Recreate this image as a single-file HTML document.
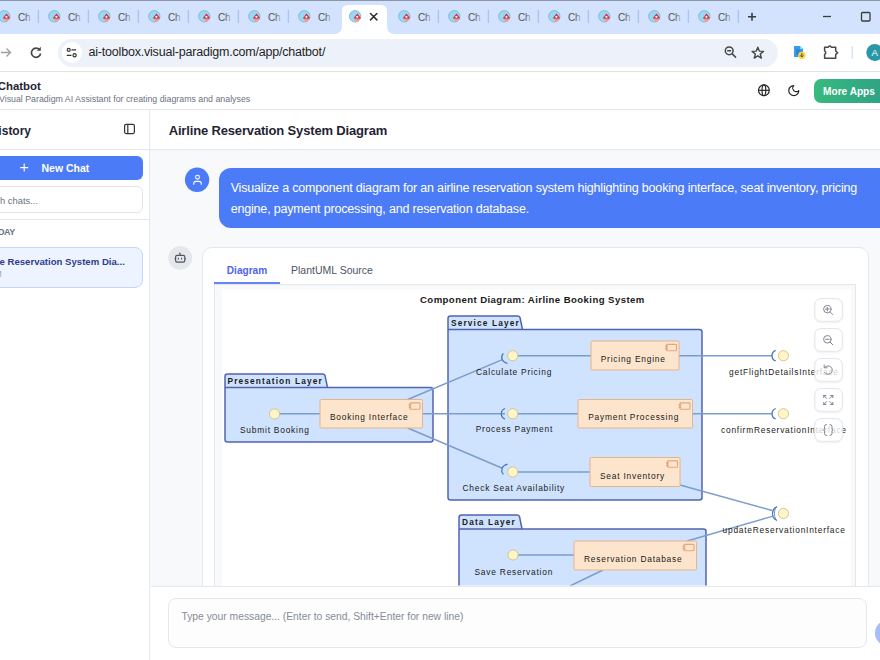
<!DOCTYPE html>
<html><head><meta charset="utf-8">
<style>
*{box-sizing:border-box;margin:0;padding:0}
html,body{width:880px;height:660px;overflow:hidden;background:#fff;font-family:"Liberation Sans",sans-serif;position:relative}
.a{position:absolute}
.t{position:absolute;white-space:nowrap;line-height:1}
</style></head><body>

<!-- ===== Browser tab strip ===== -->
<div class="a" style="left:0;top:0;width:880px;height:34px;background:#d3e3fd"></div>
<div class="a" style="left:0;top:0;width:880px;height:1px;background:#8c96a6"></div>

<!-- ===== Toolbar ===== -->
<div class="a" style="left:0;top:34px;width:880px;height:38px;background:#fff;border-bottom:1px solid #e3e3e3"></div>
<div class="a" style="left:57.5px;top:38.5px;width:720.5px;height:28.5px;border-radius:14.25px;background:#edf2fa"></div>
<div class="a" style="left:61.5px;top:42.3px;width:20.4px;height:20.4px;border-radius:10.2px;background:#fff"></div>
<div class="t" style="left:88.5px;top:46px;font-size:12.5px;letter-spacing:-0.2px;color:#1f1f1f">ai-toolbox.visual-paradigm.com/app/chatbot/</div>

<!-- ===== App header ===== -->
<div class="a" style="left:0;top:72px;width:880px;height:38px;background:#fff;border-bottom:1px solid #e4e5e9;box-shadow:0 1px 2px rgba(0,0,0,.06)"></div>
<div class="t" style="left:-2.3px;top:81px;font-size:11.4px;font-weight:700;color:#1f2433">Chatbot</div>
<div class="t" style="left:-1px;top:95px;font-size:8.8px;color:#6b7280">Visual Paradigm AI Assistant for creating diagrams and analyses</div>
<div class="a" style="left:813.8px;top:78.6px;width:90px;height:24px;border-radius:7px;background:linear-gradient(100deg,#38ba7d,#2b9b89)"></div>
<div class="t" style="left:823.1px;top:87px;font-size:10.1px;font-weight:700;color:#fff">More Apps</div>

<svg class="a" style="left:0;top:0" width="880" height="110" viewBox="0 0 880 110">
<defs><linearGradient id="fade" x1="0" x2="1" y1="0" y2="0"><stop offset="0" stop-color="#4d4d4d"/><stop offset="0.55" stop-color="#555"/><stop offset="1" stop-color="#a9b3c6"/></linearGradient><linearGradient id="dg" x1="0" x2="0" y1="0" y2="1"><stop offset="0" stop-color="#d3202e"/><stop offset="0.5" stop-color="#d63a44"/><stop offset="0.62" stop-color="#ec8f95"/><stop offset="1" stop-color="#f2a9ad"/></linearGradient></defs>
<path d="M334 34 Q342 34 342 26 L342 11 Q342 5 348 5 L381 5 Q387 5 387 11 L387 26 Q387 34 395 34 Z" fill="#fff"/>
<circle cx="4.3" cy="16.3" r="5.7" fill="#98d7f5" stroke="#86b5cf" stroke-width="0.9"/>
<path d="M6.5 13.600000000000001 L10.1 18.1 L6.5 22.5 L2.9 18.1 Z" fill="url(#dg)"/>
<circle cx="6.4" cy="16.8" r="1.1" fill="#fff"/>
<text x="17.9" y="21" font-family="Liberation Sans" font-size="10" fill="url(#fade)">Ch</text>
<circle cx="54.3" cy="16.3" r="5.7" fill="#98d7f5" stroke="#86b5cf" stroke-width="0.9"/>
<path d="M56.5 13.600000000000001 L60.099999999999994 18.1 L56.5 22.5 L52.9 18.1 Z" fill="url(#dg)"/>
<circle cx="56.4" cy="16.8" r="1.1" fill="#fff"/>
<text x="67.89999999999999" y="21" font-family="Liberation Sans" font-size="10" fill="url(#fade)">Ch</text>
<circle cx="104.3" cy="16.3" r="5.7" fill="#98d7f5" stroke="#86b5cf" stroke-width="0.9"/>
<path d="M106.5 13.600000000000001 L110.1 18.1 L106.5 22.5 L102.89999999999999 18.1 Z" fill="url(#dg)"/>
<circle cx="106.39999999999999" cy="16.8" r="1.1" fill="#fff"/>
<text x="117.89999999999999" y="21" font-family="Liberation Sans" font-size="10" fill="url(#fade)">Ch</text>
<circle cx="154.3" cy="16.3" r="5.7" fill="#98d7f5" stroke="#86b5cf" stroke-width="0.9"/>
<path d="M156.5 13.600000000000001 L160.10000000000002 18.1 L156.5 22.5 L152.9 18.1 Z" fill="url(#dg)"/>
<circle cx="156.4" cy="16.8" r="1.1" fill="#fff"/>
<text x="167.9" y="21" font-family="Liberation Sans" font-size="10" fill="url(#fade)">Ch</text>
<circle cx="204.3" cy="16.3" r="5.7" fill="#98d7f5" stroke="#86b5cf" stroke-width="0.9"/>
<path d="M206.5 13.600000000000001 L210.10000000000002 18.1 L206.5 22.5 L202.9 18.1 Z" fill="url(#dg)"/>
<circle cx="206.4" cy="16.8" r="1.1" fill="#fff"/>
<text x="217.9" y="21" font-family="Liberation Sans" font-size="10" fill="url(#fade)">Ch</text>
<circle cx="254.3" cy="16.3" r="5.7" fill="#98d7f5" stroke="#86b5cf" stroke-width="0.9"/>
<path d="M256.5 13.600000000000001 L260.1 18.1 L256.5 22.5 L252.9 18.1 Z" fill="url(#dg)"/>
<circle cx="256.40000000000003" cy="16.8" r="1.1" fill="#fff"/>
<text x="267.90000000000003" y="21" font-family="Liberation Sans" font-size="10" fill="url(#fade)">Ch</text>
<circle cx="304.3" cy="16.3" r="5.7" fill="#98d7f5" stroke="#86b5cf" stroke-width="0.9"/>
<path d="M306.5 13.600000000000001 L310.1 18.1 L306.5 22.5 L302.90000000000003 18.1 Z" fill="url(#dg)"/>
<circle cx="306.40000000000003" cy="16.8" r="1.1" fill="#fff"/>
<text x="317.90000000000003" y="21" font-family="Liberation Sans" font-size="10" fill="url(#fade)">Ch</text>
<circle cx="355.1" cy="16.3" r="5.7" fill="#98d7f5" stroke="#86b5cf" stroke-width="0.9"/>
<path d="M357.3 13.600000000000001 L360.90000000000003 18.1 L357.3 22.5 L353.70000000000005 18.1 Z" fill="url(#dg)"/>
<circle cx="357.20000000000005" cy="16.8" r="1.1" fill="#fff"/>
<path d="M370.5 13.5 L376.9 19.9 M376.9 13.5 L370.5 19.9" stroke="#303030" stroke-width="1.5" stroke-linecap="round"/>
<circle cx="404.3" cy="16.3" r="5.7" fill="#98d7f5" stroke="#86b5cf" stroke-width="0.9"/>
<path d="M406.5 13.600000000000001 L410.1 18.1 L406.5 22.5 L402.90000000000003 18.1 Z" fill="url(#dg)"/>
<circle cx="406.40000000000003" cy="16.8" r="1.1" fill="#fff"/>
<text x="417.90000000000003" y="21" font-family="Liberation Sans" font-size="10" fill="url(#fade)">Ch</text>
<circle cx="454.3" cy="16.3" r="5.7" fill="#98d7f5" stroke="#86b5cf" stroke-width="0.9"/>
<path d="M456.5 13.600000000000001 L460.1 18.1 L456.5 22.5 L452.90000000000003 18.1 Z" fill="url(#dg)"/>
<circle cx="456.40000000000003" cy="16.8" r="1.1" fill="#fff"/>
<text x="467.90000000000003" y="21" font-family="Liberation Sans" font-size="10" fill="url(#fade)">Ch</text>
<circle cx="504.3" cy="16.3" r="5.7" fill="#98d7f5" stroke="#86b5cf" stroke-width="0.9"/>
<path d="M506.5 13.600000000000001 L510.1 18.1 L506.5 22.5 L502.90000000000003 18.1 Z" fill="url(#dg)"/>
<circle cx="506.40000000000003" cy="16.8" r="1.1" fill="#fff"/>
<text x="517.9" y="21" font-family="Liberation Sans" font-size="10" fill="url(#fade)">Ch</text>
<circle cx="554.3" cy="16.3" r="5.7" fill="#98d7f5" stroke="#86b5cf" stroke-width="0.9"/>
<path d="M556.5 13.600000000000001 L560.0999999999999 18.1 L556.5 22.5 L552.9 18.1 Z" fill="url(#dg)"/>
<circle cx="556.4" cy="16.8" r="1.1" fill="#fff"/>
<text x="567.9" y="21" font-family="Liberation Sans" font-size="10" fill="url(#fade)">Ch</text>
<circle cx="604.3" cy="16.3" r="5.7" fill="#98d7f5" stroke="#86b5cf" stroke-width="0.9"/>
<path d="M606.5 13.600000000000001 L610.0999999999999 18.1 L606.5 22.5 L602.9 18.1 Z" fill="url(#dg)"/>
<circle cx="606.4" cy="16.8" r="1.1" fill="#fff"/>
<text x="617.9" y="21" font-family="Liberation Sans" font-size="10" fill="url(#fade)">Ch</text>
<circle cx="654.3" cy="16.3" r="5.7" fill="#98d7f5" stroke="#86b5cf" stroke-width="0.9"/>
<path d="M656.5 13.600000000000001 L660.0999999999999 18.1 L656.5 22.5 L652.9 18.1 Z" fill="url(#dg)"/>
<circle cx="656.4" cy="16.8" r="1.1" fill="#fff"/>
<text x="667.9" y="21" font-family="Liberation Sans" font-size="10" fill="url(#fade)">Ch</text>
<circle cx="704.3" cy="16.3" r="5.7" fill="#98d7f5" stroke="#86b5cf" stroke-width="0.9"/>
<path d="M706.5 13.600000000000001 L710.0999999999999 18.1 L706.5 22.5 L702.9 18.1 Z" fill="url(#dg)"/>
<circle cx="706.4" cy="16.8" r="1.1" fill="#fff"/>
<text x="717.9" y="21" font-family="Liberation Sans" font-size="10" fill="url(#fade)">Ch</text>
<line x1="38.4" y1="10" x2="38.4" y2="23" stroke="#abc4f2" stroke-width="1.4"/>
<line x1="88.4" y1="10" x2="88.4" y2="23" stroke="#abc4f2" stroke-width="1.4"/>
<line x1="138.4" y1="10" x2="138.4" y2="23" stroke="#abc4f2" stroke-width="1.4"/>
<line x1="188.4" y1="10" x2="188.4" y2="23" stroke="#abc4f2" stroke-width="1.4"/>
<line x1="238.4" y1="10" x2="238.4" y2="23" stroke="#abc4f2" stroke-width="1.4"/>
<line x1="288.4" y1="10" x2="288.4" y2="23" stroke="#abc4f2" stroke-width="1.4"/>
<line x1="438.4" y1="10" x2="438.4" y2="23" stroke="#abc4f2" stroke-width="1.4"/>
<line x1="488.4" y1="10" x2="488.4" y2="23" stroke="#abc4f2" stroke-width="1.4"/>
<line x1="538.4" y1="10" x2="538.4" y2="23" stroke="#abc4f2" stroke-width="1.4"/>
<line x1="588.4" y1="10" x2="588.4" y2="23" stroke="#abc4f2" stroke-width="1.4"/>
<line x1="638.4" y1="10" x2="638.4" y2="23" stroke="#abc4f2" stroke-width="1.4"/>
<line x1="688.4" y1="10" x2="688.4" y2="23" stroke="#abc4f2" stroke-width="1.4"/>
<line x1="738.4" y1="10" x2="738.4" y2="23" stroke="#abc4f2" stroke-width="1.4"/>
<path d="M748 16.8 H756 M752 12.8 V20.8" stroke="#3c3c3c" stroke-width="1.6"/>
<path d="M823 16.5 H831" stroke="#3c3c3c" stroke-width="1.3"/>
<rect x="861.5" y="12.5" width="8.5" height="8.5" rx="1" fill="none" stroke="#3c3c3c" stroke-width="1.3"/>
<path d="M1 52.5 H10.5 M6.5 48.5 L10.5 52.5 L6.5 56.5" fill="none" stroke="#a0a0a0" stroke-width="1.4"/>
<path d="M39.6 49.8 A4.6 4.6 0 1 0 40.6 53.5" fill="none" stroke="#474747" stroke-width="1.6"/>
<path d="M40.8 46.8 L40.8 50.8 L36.8 50.8 Z" fill="#474747"/>
<circle cx="68.7" cy="49.9" r="1.5" fill="none" stroke="#333" stroke-width="1.2"/>
<path d="M71.5 49.9 H76 M66.8 55.3 H71.5" stroke="#333" stroke-width="1.3"/>
<circle cx="74.6" cy="55.3" r="1.6" fill="none" stroke="#333" stroke-width="1.2"/>
<circle cx="729.2" cy="50.8" r="3.9" fill="none" stroke="#474747" stroke-width="1.5"/>
<path d="M727.2 50.8 H731.2 M732 53.6 L736 57.6" stroke="#474747" stroke-width="1.5"/>
<polygon points="757.80,47.20 759.33,51.10 763.51,51.35 760.27,54.00 761.33,58.05 757.80,55.80 754.27,58.05 755.33,54.00 752.09,51.35 756.27,51.10" fill="none" stroke="#474747" stroke-width="1.4" stroke-linejoin="round"/>
<path d="M794 46.5 Q794 46 794.5 46 L800 46 L803 49 L803 56.5 Q803 57 802.5 57 L794.5 57 Q794 57 794 56.5 Z" fill="#3a9be6"/>
<path d="M800 46 L803 49 L800 49 Z" fill="#7fe0e6"/>
<path d="M796 50 H799.5 M796 52 H799.5 M796 54 H798.5" stroke="#1d5fa8" stroke-width="0.7"/>
<circle cx="801.8" cy="55.3" r="3.6" fill="#f7d53a"/>
<path d="M801.8 53.2 V56.5 M800.2 55.4 L801.8 57 L803.4 55.4" fill="none" stroke="#3a3a3a" stroke-width="0.9"/>
<path d="M824.6 47.2 H828.3 Q829.8 45 831.3 47.2 H835.7 V51 L837.7 52.7 L835.7 54.4 V58.2 H824.6 V54.4 Q826.9 52.7 824.6 51 Z" fill="none" stroke="#474747" stroke-width="1.5" stroke-linejoin="round"/>
<line x1="852.2" y1="46" x2="852.2" y2="59" stroke="#c8d8f8" stroke-width="1"/>
<circle cx="874.8" cy="52.6" r="8.5" fill="#2a97a6"/>
<text x="871.4" y="56.2" font-family="Liberation Sans" font-size="9.6" fill="#fff">A</text>
<g fill="none" stroke="#222" stroke-width="1.15"><circle cx="763.9" cy="90.3" r="5.4"/><ellipse cx="763.9" cy="90.3" rx="1.9" ry="5.4"/><path d="M758.5 90.3 H769.3"/></g>
<path transform="translate(793.8 90.6) scale(0.56) translate(-12 -12)" d="M12 3a6 6 0 0 0 9 9 9 9 0 1 1-9-9Z" fill="none" stroke="#222" stroke-width="2.1" stroke-linejoin="round"/>
</svg>
<!-- ===== Sidebar ===== -->
<div class="a" style="left:0;top:110px;width:150px;height:550px;background:#fff;border-right:1px solid #e5e7eb"></div>
<div class="a" style="left:0;top:149px;width:149px;height:1px;background:#e5e7eb"></div>
<div class="t" style="left:-10.3px;top:124.5px;font-size:12px;font-weight:700;color:#1f2433">History</div>
<svg class="a" style="left:0;top:110px" width="150" height="180" viewBox="0 110 150 180">
<rect x="124.6" y="124.4" width="9.8" height="9.2" rx="1.5" fill="none" stroke="#333" stroke-width="1.2"/>
<path d="M127.8 124.4 V133.6" stroke="#333" stroke-width="1.2"/>
</svg>
<div class="a" style="left:-8px;top:155.5px;width:151px;height:24.3px;border-radius:6px;background:#4c7bf8"></div>
<svg class="a" style="left:0;top:150px" width="40" height="30" viewBox="0 150 40 30"><path d="M20.2 167.6 H28.2 M24.2 163.6 V171.6" stroke="#fff" stroke-width="1.1"/></svg>
<div class="t" style="left:41.5px;top:163px;font-size:10.5px;font-weight:700;color:#fff">New Chat</div>
<div class="a" style="left:-8px;top:186px;width:151px;height:26.5px;border-radius:6px;border:1px solid #e3e5ea;background:#fff"></div>
<div class="t" style="left:0px;top:196px;font-size:9.4px;color:#6b7280">h chats...</div>
<div class="a" style="left:0;top:219px;width:149px;height:1px;background:#e5e7eb"></div>
<div class="t" style="left:-2px;top:228px;font-size:9px;font-weight:700;color:#6b7280;letter-spacing:-0.4px">DAY</div>
<div class="a" style="left:-8px;top:247px;width:151px;height:40.5px;border-radius:8px;border:1px solid #c3d5fb;background:#eef4ff"></div>
<div class="t" style="left:-0.5px;top:257px;font-size:9.6px;font-weight:700;color:#2f3b8f">e Reservation System Dia...</div>
<div class="t" style="left:-5.5px;top:270px;font-size:8.5px;color:#9aa1ad">M</div>

<!-- ===== Main ===== -->
<div class="a" style="left:150px;top:110px;width:730px;height:40px;background:#fff;border-bottom:1px solid #e5e7eb"></div>
<div class="t" style="left:168.7px;top:124px;font-size:13px;letter-spacing:-0.16px;font-weight:700;color:#1f2433">Airline Reservation System Diagram</div>
<div class="a" style="left:150px;top:150px;width:730px;height:436px;background:#f8f9fb"></div>

<!-- user message -->
<svg class="a" style="left:160px;top:160px" width="60" height="40" viewBox="160 160 60 40">
<circle cx="197.1" cy="179.8" r="12.2" fill="#4c7bf7"/>
<circle cx="197.5" cy="177.2" r="1.9" fill="none" stroke="#fff" stroke-width="1.1"/>
<path d="M193.7 184.8 V183.8 Q193.7 181.4 196 181.4 H199 Q201.3 181.4 201.3 183.8 V184.8" fill="none" stroke="#fff" stroke-width="1.1"/>
</svg>
<div class="a" style="left:218.5px;top:168px;width:700px;height:60px;border-radius:12px;background:#4c7bf7"></div>
<div class="t" style="left:230.7px;top:182px;font-size:12.5px;letter-spacing:-0.18px;color:#fff">Visualize a component diagram for an airline reservation system highlighting booking interface, seat inventory, pricing</div>
<div class="t" style="left:230.7px;top:203px;font-size:12.5px;letter-spacing:-0.18px;color:#fff">engine, payment processing, and reservation database.</div>

<!-- bot -->
<svg class="a" style="left:160px;top:240px" width="40" height="40" viewBox="160 240 40 40">
<circle cx="180.2" cy="257.8" r="11.9" fill="#e5e7eb"/>
<rect x="175.6" y="255.4" width="9.2" height="6.8" rx="1.6" fill="none" stroke="#4b5563" stroke-width="1.2"/>
<path d="M178.4 257.8 V259.6 M181.6 257.8 V259.6 M174.4 258.7 H175.6 M184.8 258.7 H186 M180.1 255.4 V253.8 Q180.1 253 179 253" fill="none" stroke="#4b5563" stroke-width="1.1"/>
</svg>
<div class="a" style="left:202px;top:246.5px;width:667px;height:420px;border-radius:10px;border:1px solid #e5e7eb;background:#fff"></div>
<div class="t" style="left:226.8px;top:266px;font-size:10.1px;font-weight:700;color:#4f63f0">Diagram</div>
<div class="t" style="left:291px;top:265px;font-size:10.5px;color:#4b5563">PlantUML Source</div>
<div class="a" style="left:214px;top:284px;width:642px;height:1px;background:#e5e7eb"></div>
<div class="a" style="left:214px;top:282px;width:65.5px;height:2px;background:#6586f6"></div>
<div class="a" style="left:214px;top:285px;width:642px;height:320px;border:1px solid #e5e7eb;border-top:0;background:#f8f9fb"></div>
<div class="a" style="left:221.5px;top:288.5px;width:629px;height:320px;background:#fff"></div>

<svg class="a" style="left:0;top:0" width="880" height="660" viewBox="0 0 880 660">
<defs><clipPath id="dc"><rect x="221.5" y="288.5" width="629" height="297"/></clipPath></defs>
<g clip-path="url(#dc)">
<text x="420" y="303" font-family="Liberation Sans" font-size="9.6" font-weight="700" letter-spacing="0.42" fill="#1a1a1a">Component Diagram: Airline Booking System</text>
<path d="M225 376.5 Q225 374 227.5 374 L322.5 374 Q324.5 374 325.0 375.5 L327.5 387.5 L430.5 387.5 Q433 387.5 433 390.0 L433 439.5 Q433 442 430.5 442 L227.5 442 Q225 442 225 439.5 Z M225 387.5 H327.5" fill="#cfe2fe" stroke="#5163b3" stroke-width="1.5"/>
<text x="227.5" y="383.5" font-family="Liberation Sans" font-size="8.3" font-weight="700" letter-spacing="1.15" fill="#1a1a1a">Presentation Layer</text>
<path d="M448 318.5 Q448 316 450.5 316 L517.5 316 Q519.5 316 520.0 317.5 L522.5 329.5 L699.5 329.5 Q702 329.5 702 332.0 L702 497.5 Q702 500 699.5 500 L450.5 500 Q448 500 448 497.5 Z M448 329.5 H522.5" fill="#cfe2fe" stroke="#5163b3" stroke-width="1.5"/>
<text x="451" y="325.5" font-family="Liberation Sans" font-size="8.3" font-weight="700" letter-spacing="1.15" fill="#1a1a1a">Service Layer</text>
<path d="M459 517.5 Q459 515 461.5 515 L517 515 Q519 515 519.5 516.5 L522 529 L703.5 529 Q706 529 706 531.5 L706 637.5 Q706 640 703.5 640 L461.5 640 Q459 640 459 637.5 Z M459 529 H522" fill="#cfe2fe" stroke="#5163b3" stroke-width="1.5"/>
<text x="462" y="525" font-family="Liberation Sans" font-size="8.3" font-weight="700" letter-spacing="1.15" fill="#1a1a1a">Data Layer</text>
<line x1="279" y1="413.75" x2="320" y2="413.75" stroke="#7b9dcb" stroke-width="1.4"/>
<line x1="407.7" y1="399.5" x2="501.8" y2="359.8" stroke="#7b9dcb" stroke-width="1.4"/>
<line x1="422.5" y1="413.75" x2="505" y2="413.75" stroke="#7b9dcb" stroke-width="1.4"/>
<line x1="407.7" y1="428" x2="501.8" y2="468" stroke="#7b9dcb" stroke-width="1.4"/>
<line x1="517.5" y1="355.75" x2="591" y2="355.75" stroke="#7b9dcb" stroke-width="1.4"/>
<line x1="517.5" y1="413.75" x2="578" y2="413.75" stroke="#7b9dcb" stroke-width="1.4"/>
<line x1="517.5" y1="472" x2="590" y2="472" stroke="#7b9dcb" stroke-width="1.4"/>
<line x1="679" y1="355.75" x2="772" y2="355.75" stroke="#7b9dcb" stroke-width="1.4"/>
<line x1="692.5" y1="413.75" x2="772" y2="413.75" stroke="#7b9dcb" stroke-width="1.4"/>
<line x1="680" y1="485" x2="772.3" y2="510.5" stroke="#7b9dcb" stroke-width="1.4"/>
<line x1="687" y1="541" x2="772.3" y2="516.3" stroke="#7b9dcb" stroke-width="1.4"/>
<line x1="518" y1="555" x2="574" y2="555" stroke="#7b9dcb" stroke-width="1.4"/>
<line x1="603" y1="570" x2="570" y2="586" stroke="#7b9dcb" stroke-width="1.4"/>
<rect x="320" y="399.5" width="102.5" height="28.5" rx="1.2" fill="#fde5cd" stroke="#e6b48a" stroke-width="1"/>
<rect x="410.0" y="402.9" width="10" height="6.3" rx="0.6" fill="#fde5cd" stroke="#e2a77c" stroke-width="1.1"/>
<rect x="408.7" y="404.0" width="2.6" height="1.7" fill="#e2a77c"/>
<rect x="408.7" y="406.5" width="2.6" height="1.7" fill="#e2a77c"/>
<text x="330" y="420" font-family="Liberation Sans" font-size="8.4" letter-spacing="0.78" fill="#1a1a1a">Booking Interface</text>
<rect x="591" y="341" width="88" height="29" rx="1.2" fill="#fde5cd" stroke="#e6b48a" stroke-width="1"/>
<rect x="666.5" y="344.4" width="10" height="6.3" rx="0.6" fill="#fde5cd" stroke="#e2a77c" stroke-width="1.1"/>
<rect x="665.2" y="345.5" width="2.6" height="1.7" fill="#e2a77c"/>
<rect x="665.2" y="348.0" width="2.6" height="1.7" fill="#e2a77c"/>
<text x="600.75" y="362" font-family="Liberation Sans" font-size="8.4" letter-spacing="0.78" fill="#1a1a1a">Pricing Engine</text>
<rect x="578" y="399.5" width="114.5" height="28.5" rx="1.2" fill="#fde5cd" stroke="#e6b48a" stroke-width="1"/>
<rect x="680.0" y="402.9" width="10" height="6.3" rx="0.6" fill="#fde5cd" stroke="#e2a77c" stroke-width="1.1"/>
<rect x="678.7" y="404.0" width="2.6" height="1.7" fill="#e2a77c"/>
<rect x="678.7" y="406.5" width="2.6" height="1.7" fill="#e2a77c"/>
<text x="588.25" y="420" font-family="Liberation Sans" font-size="8.4" letter-spacing="0.78" fill="#1a1a1a">Payment Processing</text>
<rect x="590" y="457.5" width="90" height="29.0" rx="1.2" fill="#fde5cd" stroke="#e6b48a" stroke-width="1"/>
<rect x="667.5" y="460.9" width="10" height="6.3" rx="0.6" fill="#fde5cd" stroke="#e2a77c" stroke-width="1.1"/>
<rect x="666.2" y="462.0" width="2.6" height="1.7" fill="#e2a77c"/>
<rect x="666.2" y="464.5" width="2.6" height="1.7" fill="#e2a77c"/>
<text x="600" y="479" font-family="Liberation Sans" font-size="8.4" letter-spacing="0.78" fill="#1a1a1a">Seat Inventory</text>
<rect x="574" y="541" width="122.5" height="29" rx="1.2" fill="#fde5cd" stroke="#e6b48a" stroke-width="1"/>
<rect x="684.0" y="544.4" width="10" height="6.3" rx="0.6" fill="#fde5cd" stroke="#e2a77c" stroke-width="1.1"/>
<rect x="682.7" y="545.5" width="2.6" height="1.7" fill="#e2a77c"/>
<rect x="682.7" y="548.0" width="2.6" height="1.7" fill="#e2a77c"/>
<text x="584" y="562" font-family="Liberation Sans" font-size="8.4" letter-spacing="0.78" fill="#1a1a1a">Reservation Database</text>
<circle cx="274.5" cy="414" r="5.1" fill="#fef5c9" stroke="#d2c182" stroke-width="0.9"/>
<text x="240" y="432.5" font-family="Liberation Sans" font-size="8.4" letter-spacing="0.78" fill="#1a1a1a">Submit Booking</text>
<circle cx="512.7" cy="355.7" r="5.1" fill="#fef5c9" stroke="#d2c182" stroke-width="0.9"/>
<text x="476" y="374.5" font-family="Liberation Sans" font-size="8.4" letter-spacing="0.78" fill="#1a1a1a">Calculate Pricing</text>
<path d="M503.4 353.4 C500.5 356.5 501 361.5 507.6 363.5" fill="none" stroke="#4a76b4" stroke-width="1.3"/>
<circle cx="512.7" cy="413.75" r="5.1" fill="#fef5c9" stroke="#d2c182" stroke-width="0.9"/>
<text x="475.75" y="432" font-family="Liberation Sans" font-size="8.4" letter-spacing="0.78" fill="#1a1a1a">Process Payment</text>
<path d="M505.00000000000006 408.5 A5.6 5.6 0 0 0 505.00000000000006 419.0" fill="none" stroke="#4a76b4" stroke-width="1.3"/>
<circle cx="512.7" cy="472" r="5.1" fill="#fef5c9" stroke="#d2c182" stroke-width="0.9"/>
<text x="462.5" y="491" font-family="Liberation Sans" font-size="8.4" letter-spacing="0.78" fill="#1a1a1a">Check Seat Availability</text>
<path d="M507.6 464.2 C501 466 500.5 471 503.4 474.4" fill="none" stroke="#4a76b4" stroke-width="1.3"/>
<circle cx="783.4" cy="355.7" r="5.1" fill="#fef5c9" stroke="#d2c182" stroke-width="0.9"/>
<text x="729" y="375" font-family="Liberation Sans" font-size="8.4" letter-spacing="0.78" fill="#1a1a1a">getFlightDetailsInterface</text>
<path d="M775.6999999999999 350.45 A5.6 5.6 0 0 0 775.6999999999999 360.95" fill="none" stroke="#4a76b4" stroke-width="1.3"/>
<circle cx="783.4" cy="413.75" r="5.1" fill="#fef5c9" stroke="#d2c182" stroke-width="0.9"/>
<text x="721" y="432.5" font-family="Liberation Sans" font-size="8.4" letter-spacing="0.78" fill="#1a1a1a">confirmReservationInterface</text>
<path d="M775.6999999999999 408.5 A5.6 5.6 0 0 0 775.6999999999999 419.0" fill="none" stroke="#4a76b4" stroke-width="1.3"/>
<circle cx="783.4" cy="513.4" r="5.1" fill="#fef5c9" stroke="#d2c182" stroke-width="0.9"/>
<text x="722.5" y="532.5" font-family="Liberation Sans" font-size="8.4" letter-spacing="0.78" fill="#1a1a1a">updateReservationInterface</text>
<path d="M777 506.6 C771 509 771 518 777 520.5" fill="none" stroke="#4a76b4" stroke-width="1.3"/>
<path d="M776 507.5 C774 510 774 517 776 519.5" fill="none" stroke="#4a76b4" stroke-width="0.8"/>
<circle cx="513" cy="555" r="5.1" fill="#fef5c9" stroke="#d2c182" stroke-width="0.9"/>
<text x="474.5" y="574.5" font-family="Liberation Sans" font-size="8.4" letter-spacing="0.78" fill="#1a1a1a">Save Reservation</text>
</g>
<rect x="814.8" y="299.7" width="27.6" height="22.8" rx="6" fill="none" stroke="#000" stroke-opacity="0.04" stroke-width="2"/>
<rect x="814.8" y="298.5" width="27.6" height="22.8" rx="6" fill="#fff" fill-opacity="0.78" stroke="#e4e6eb" stroke-width="1"/>
<rect x="814.8" y="329.7" width="27.6" height="22.8" rx="6" fill="none" stroke="#000" stroke-opacity="0.04" stroke-width="2"/>
<rect x="814.8" y="328.5" width="27.6" height="22.8" rx="6" fill="#fff" fill-opacity="0.78" stroke="#e4e6eb" stroke-width="1"/>
<rect x="814.8" y="359.7" width="27.6" height="22.8" rx="6" fill="none" stroke="#000" stroke-opacity="0.04" stroke-width="2"/>
<rect x="814.8" y="358.5" width="27.6" height="22.8" rx="6" fill="#fff" fill-opacity="0.78" stroke="#e4e6eb" stroke-width="1"/>
<rect x="814.8" y="389.7" width="27.6" height="22.8" rx="6" fill="none" stroke="#000" stroke-opacity="0.04" stroke-width="2"/>
<rect x="814.8" y="388.5" width="27.6" height="22.8" rx="6" fill="#fff" fill-opacity="0.78" stroke="#e4e6eb" stroke-width="1"/>
<rect x="814.8" y="419.7" width="27.6" height="22.8" rx="6" fill="none" stroke="#000" stroke-opacity="0.04" stroke-width="2"/>
<rect x="814.8" y="418.5" width="27.6" height="22.8" rx="6" fill="#fff" fill-opacity="0.78" stroke="#e4e6eb" stroke-width="1"/>
<g fill="none" stroke="#80858f" stroke-width="1" stroke-linecap="round">
<circle cx="827.3" cy="309.1" r="3.7"/><path d="M825.5 309.1 H829.1 M827.3 307.3 V310.9 M830 311.8 L832.8 314.6"/>
<circle cx="827.3" cy="339.3" r="3.7"/><path d="M825.5 339.3 H829.1 M830 342 L832.8 344.8"/>
<path d="M825 367.2 A4.2 4.2 0 1 1 824.6 372.5"/><path d="M824.2 365 V367.8 H827"/>
<path d="M823.8 395.5 L826.8 398.5 M823.8 395.5 H826 M823.8 395.5 V397.7 M832.8 395.5 L829.8 398.5 M832.8 395.5 H830.6 M832.8 395.5 V397.7 M823.8 404.5 L826.8 401.5 M823.8 404.5 H826 M823.8 404.5 V402.3 M832.8 404.5 L829.8 401.5 M832.8 404.5 H830.6 M832.8 404.5 V402.3"/>
<path d="M826.5 424.5 Q824.5 424.5 824.5 426.5 V428.8 Q824.5 430 823.5 430 Q824.5 430 824.5 431.2 V433.5 Q824.5 435.5 826.5 435.5 M830 424.5 Q832 424.5 832 426.5 V428.8 Q832 430 833 430 Q832 430 832 431.2 V433.5 Q832 435.5 830 435.5"/>
</g>
</svg>

<!-- ===== Input area ===== -->
<div class="a" style="left:151px;top:585.5px;width:729px;height:75px;background:#fff;border-top:1px solid #e5e7eb"></div>
<div class="a" style="left:168px;top:598px;width:699px;height:50px;border-radius:8px;border:1px solid #e5e7eb;background:#fdfdfd"></div>
<div class="t" style="left:181.5px;top:612px;font-size:10.3px;color:#878c96">Type your message... (Enter to send, Shift+Enter for new line)</div>
<div class="a" style="left:874.5px;top:620px;width:26px;height:26px;border-radius:13px;background:#a7bcfb"></div>

</body></html>
